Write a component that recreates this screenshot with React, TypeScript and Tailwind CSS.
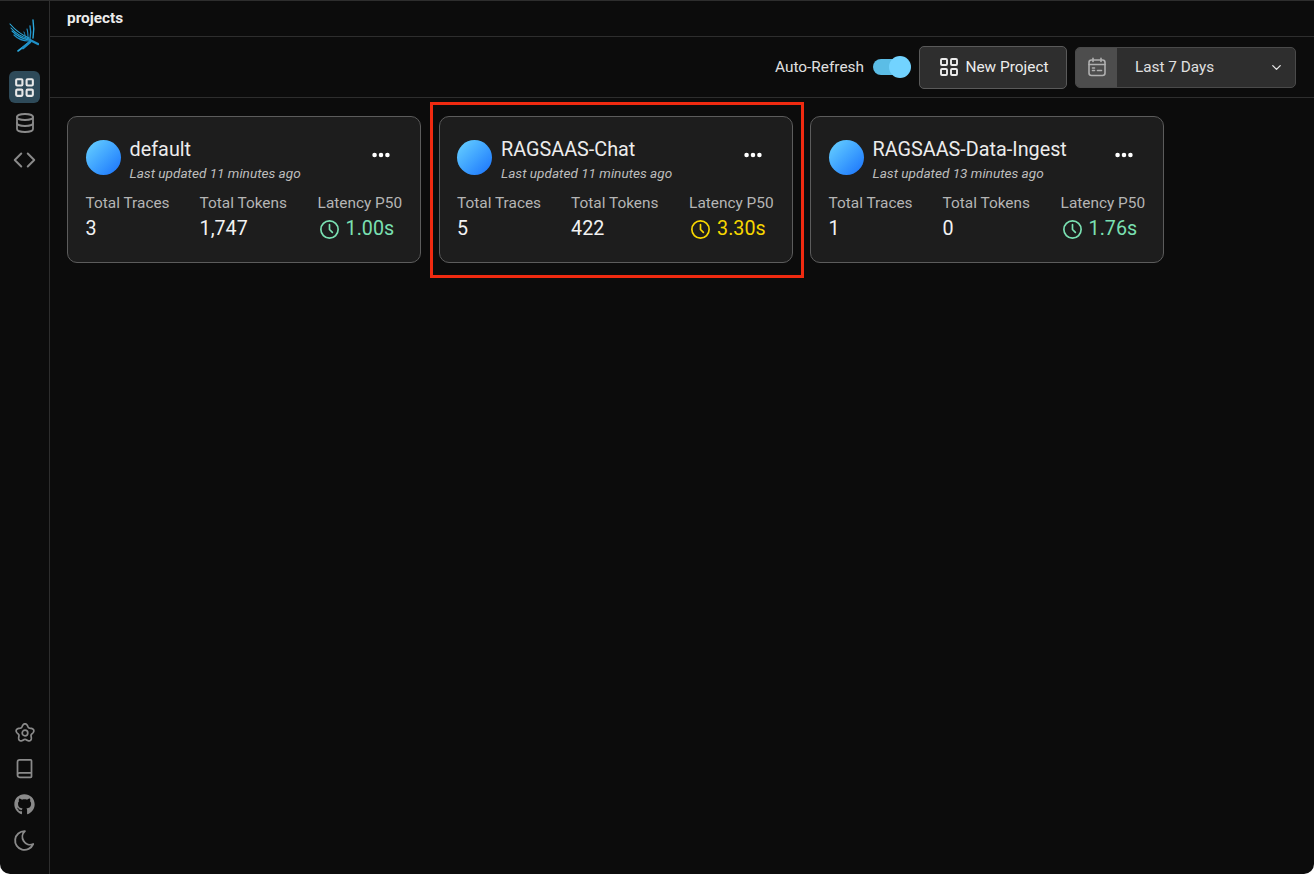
import React from "react";
import { TbLayoutGrid, TbDatabase, TbChevronLeft, TbChevronRight, TbMoon, TbClock, TbDots, TbChevronDown } from "react-icons/tb";
import { LuBook } from "react-icons/lu";
import { FaGithub } from "react-icons/fa";

function Logo() {
  return (
    <svg width="30" height="34" viewBox="0 0 30 34" fill="none">
      <g strokeLinecap="round">
        <path d="M1 6 C7 13 13 17 20 20" strokeWidth="1.1" stroke="#2fb0e4" />
        <path d="M2 10 C7 16 13 19 20 21" strokeWidth="1.1" stroke="#2aa9de" />
        <path d="M3 13 C8 18 13 21 20 22" strokeWidth="1.1" stroke="#1f9fd6" />
        <path d="M5 17 C9 21 14 23 20 23" strokeWidth="1.2" stroke="#1f8fc6" />
        <path d="M24 2 C25 8 25 14 24 20" strokeWidth="1.4" stroke="#2aa9de" />
        <path d="M21 8 C22 12 22 16 21 21" strokeWidth="1.3" stroke="#1f8fc6" />
        <path d="M18 11 C19 14 19 17 19 21" strokeWidth="1.1" stroke="#1f8fc6" />
        <path d="M15 14 C16 16 16 18 17 21" strokeWidth="1" stroke="#1f8fc6" />
        <path d="M22 23 L9 33" strokeWidth="1.6" stroke="#2aa9de" />
        <path d="M21 24 L14 30" strokeWidth="2.6" stroke="#1f8fc6" />
        <path d="M21 22 L29 26" strokeWidth="2.4" stroke="#1f8fc6" />
      </g>
    </svg>
  );
}

function CalendarIcon() {
  return (
    <svg width="20" height="20" viewBox="0 0 20 20" fill="none" stroke="currentColor" strokeWidth="1.6" strokeLinecap="round" strokeLinejoin="round">
      <rect x="2" y="3" width="16" height="15.5" rx="2.5" />
      <path d="M6 1.2V4.5M14 1.2V4.5M2 7.5H18M5.5 11H7.5M10.5 13.5H14.5M5.5 13.5H7.5" />
    </svg>
  );
}

const flower = Array.from({ length: 100 }, (_, i) => {
  const t = (i / 100) * Math.PI * 2;
  const r = 7.8 + 1.4 * Math.cos(5 * t);
  return `${(11 + r * Math.sin(t)).toFixed(2)},${(11 - r * Math.cos(t)).toFixed(2)}`;
}).join(" ");

function FlowerCog() {
  return (
    <svg width="22" height="22" viewBox="0 0 22 22" fill="none" stroke="currentColor" strokeWidth="1.7" strokeLinejoin="round">
      <polygon points={flower} />
      <circle cx="11" cy="11" r="2.8" />
    </svg>
  );
}

function Stat({ label, value, color, width, latency }: { label: string; value: string; color?: string; width: string; latency?: boolean }) {
  return (
    <div className={`${width} flex flex-col`}>
      <span className="mt-[1px] text-[15.4px] leading-[20px] text-[#b5b5b5]">{label}</span>
      {latency ? (
        <span className={`flex items-center mt-[2px] gap-[5px] text-[19.7px] leading-[28px] ${color}`}>
          <TbClock size={23} strokeWidth={1.75} />
          {value}
        </span>
      ) : (
        <span className="mt-[2px] text-[19.7px] leading-[28px] text-[#f2f2f2]">{value}</span>
      )}
    </div>
  );
}

function Card({ name, updated, traces, tokens, latency, color }: { name: string; updated: string; traces: string; tokens: string; latency: string; color: string }) {
  return (
    <div className="w-[354px] h-[147px] shrink-0 rounded-[10px] border border-[#5c5c5c] bg-[#1d1d1d] pt-[20px] pl-[17.6px] pr-[17px]">
      <div className="flex items-start h-[48px]">
        <div className="mt-[3px] w-[35px] h-[35px] rounded-full bg-gradient-to-br from-[#6bd3ff] to-[#1c6ffb]" />
        <div className="ml-[9px] flex-1 min-w-0 flex flex-col">
          <span className="text-[19.8px] leading-[26px] text-[#ececec]">{name}</span>
          <span className="-mt-[1px] text-[13.6px] leading-[22px] italic text-[#bdbdbd]">{updated}</span>
        </div>
        <TbDots size={22} strokeWidth={3} className="mt-[7px] mr-[11px] text-white" />
      </div>
      <div className="mt-[7px] flex">
        <Stat label="Total Traces" value={traces} width="w-[114px]" />
        <Stat label="Total Tokens" value={tokens} width="w-[118px]" />
        <Stat label="Latency P50" value={latency} color={color} width="flex-1" latency />
      </div>
    </div>
  );
}

export default function App() {
  return (
    <div className="relative w-[1314px] h-[874px] overflow-hidden bg-white font-['Roboto',sans-serif]">
      <div className="flex h-full bg-[#0c0c0c] border-t border-[#2e2e2e] rounded-b-[10px] overflow-hidden">
        <aside className="w-[50px] shrink-0 border-r border-[#2e2e2e] flex flex-col items-center text-[#8a8a8a]">
          <div className="mt-[17px] ml-[-1px]"><Logo /></div>
          <div className="mt-[19px] w-[31px] h-[32px] rounded-[6px] bg-[#2e4a59] flex items-center justify-center text-[#e8e8e8]">
            <TbLayoutGrid size={25} strokeWidth={2} />
          </div>
          <TbDatabase size={24} strokeWidth={1.8} className="mt-[8px]" />
          <div className="mt-[12px] flex justify-center w-[26px]">
            <TbChevronLeft size={26} strokeWidth={1.8} className="shrink-0 -mr-[13px]" />
            <TbChevronRight size={26} strokeWidth={1.8} className="shrink-0" />
          </div>
          <div className="mt-auto mb-[21px] flex flex-col items-center gap-[11px]">
            <div className="w-[25px] h-[25px] flex items-center justify-center"><FlowerCog /></div>
            <LuBook size={21} strokeWidth={2} className="my-[2px]" />
            <FaGithub size={21} className="my-[2px]" />
            <TbMoon size={25} strokeWidth={1.8} />
          </div>
        </aside>
        <main className="flex-1 min-w-0 flex flex-col">
          <header className="h-[36px] shrink-0 border-b border-[#2e2e2e] flex items-center pl-[17px]">
            <span className="text-[15.4px] font-bold text-[#ececec] mt-[1px]">projects</span>
          </header>
          <div className="h-[61px] shrink-0 border-b border-[#2e2e2e] flex items-center justify-end pr-[18px]">
            <span className="mr-[3px] pt-[2px] text-[15.4px] text-[#e0e0e0]">Auto-Refresh</span>
            <div className="relative ml-[9px] w-[35px] h-[16px] rounded-full bg-[#5bbde6] mr-[11px] -translate-x-[3px]">
              <div className="absolute -right-[3px] -top-[3px] w-[22px] h-[22px] rounded-full bg-[#72d3ff]" />
            </div>
            <button className="ml-[-3px] w-[148px] h-[43px] rounded-[5px] border border-[#5a5a5a] bg-[#2e2e2e] flex items-center justify-center gap-[4px] text-[15.4px] text-[#ececec]">
              <TbLayoutGrid size={24} strokeWidth={1.9} />
              <span className="pt-[2px]">New Project</span>
            </button>
            <div className="ml-[8px] w-[221px] h-[41px] rounded-[5px] border border-[#4a4a4a] bg-[#2e2e2e] flex items-center overflow-hidden">
              <div className="w-[41px] h-full bg-[#4d4d4d] flex items-center justify-center text-[#b0b0b0]">
                <CalendarIcon />
              </div>
              <span className="ml-[18px] text-[15.3px] text-[#e0e0e0]">Last 7 Days</span>
              <TbChevronDown size={15} strokeWidth={2.2} className="ml-auto mr-[11px] text-[#e0e0e0]" />
            </div>
          </div>
          <section className="flex gap-[17.5px] pt-[18px] pl-[17px]">
            <Card name="default" updated="Last updated 11 minutes ago" traces="3" tokens="1,747" latency="1.00s" color="text-[#7ae0b2]" />
            <Card name="RAGSAAS-Chat" updated="Last updated 11 minutes ago" traces="5" tokens="422" latency="3.30s" color="text-[#f7d600]" />
            <Card name="RAGSAAS-Data-Ingest" updated="Last updated 13 minutes ago" traces="1" tokens="0" latency="1.76s" color="text-[#7ae0b2]" />
          </section>
        </main>
      </div>
      <div className="absolute left-[430px] top-[102px] w-[374px] h-[176px] border-[3px] border-[#f02a10] pointer-events-none" />
    </div>
  );
}
